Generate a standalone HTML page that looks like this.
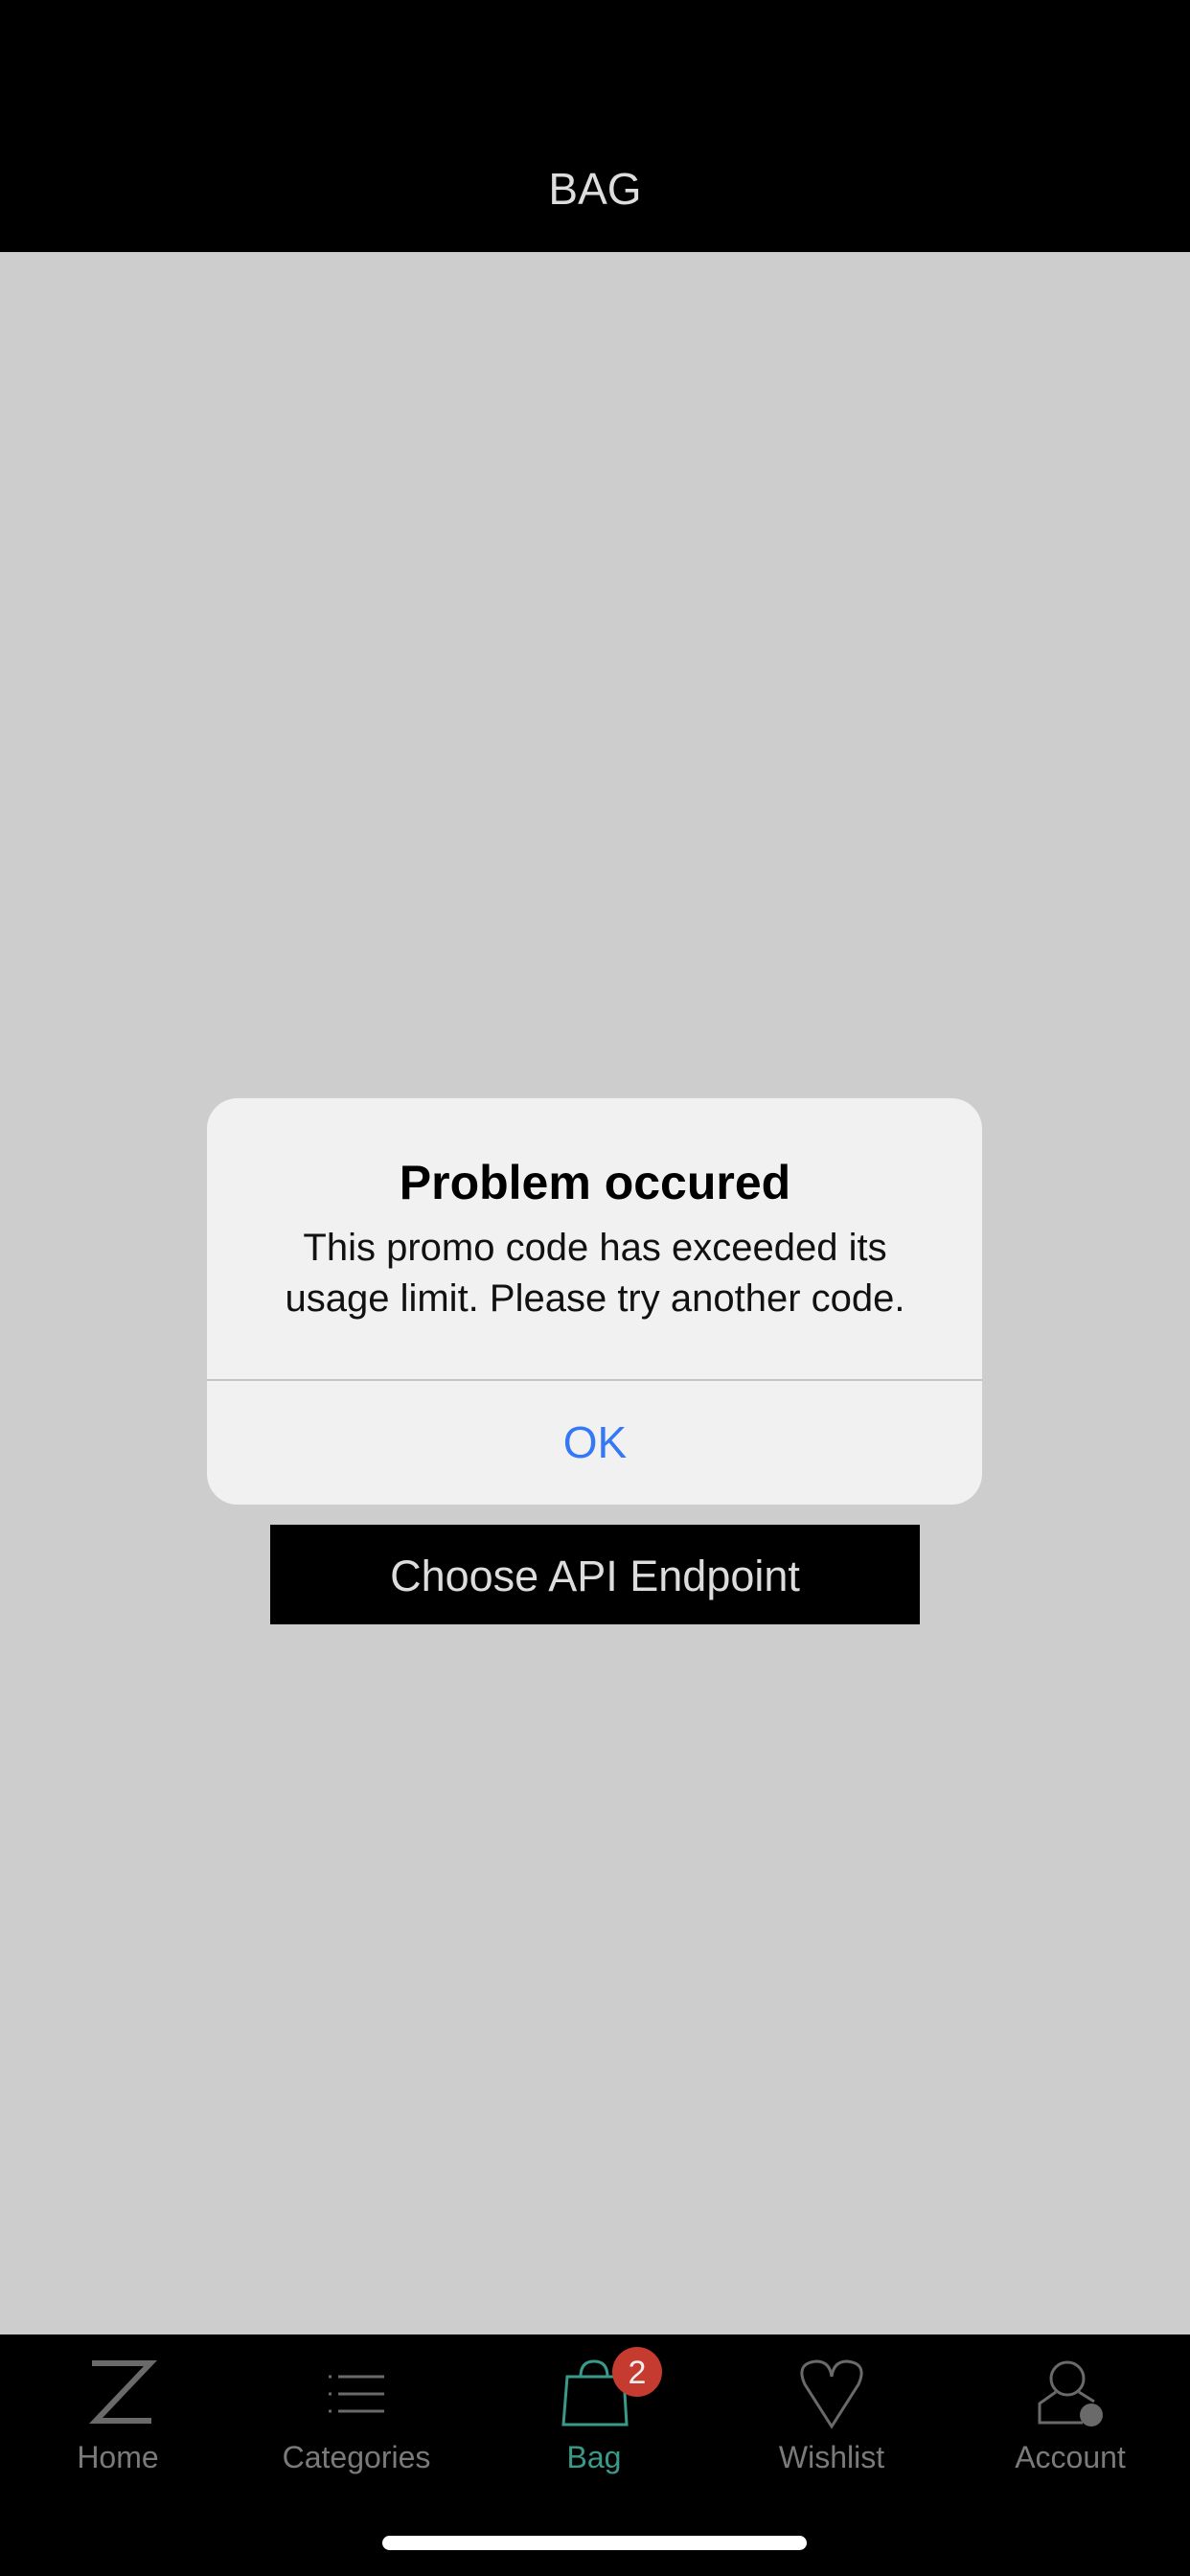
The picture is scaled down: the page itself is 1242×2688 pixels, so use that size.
<!DOCTYPE html>
<html><head><meta charset="utf-8"><style>
body{margin:0;width:1242px;height:2688px;background:#cdcdcd;position:relative;overflow:hidden;font-family:"Liberation Sans",sans-serif}
.hdr{position:absolute;left:0;top:0;width:1242px;height:263px;background:#000}
.hdr div{position:absolute;top:170px;width:100%;text-align:center;color:#ddd;font-size:46px}
.dlg{position:absolute;left:216px;top:1146px;width:809px;height:424px;background:#f1f1f1;border-radius:32px}
.t{position:absolute;top:1205px;width:100%;text-align:center;font-weight:bold;font-size:50px;color:#000}
.b{position:absolute;top:1276px;width:100%;text-align:center;font-size:40px;line-height:53px;color:#111}
.dv{position:absolute;left:0;right:0;top:293px;height:2px;background:#c4c4c4}
.ok{position:absolute;top:1478px;width:100%;text-align:center;font-size:46px;color:#3478f6}
.btn{position:absolute;left:282px;top:1591px;width:678px;height:104px;background:#000;color:#ddd;font-size:45px;text-align:center;line-height:108px}
.tab{position:absolute;left:0;top:2436px;width:1242px;height:252px;background:#000}
.lb{position:absolute;top:2546px;width:240px;margin-left:-120px;text-align:center;font-size:32px;color:#7a7a7a}
.hi{position:absolute;left:399px;top:2646px;width:443px;height:15px;border-radius:8px;background:#fff}
</style></head><body>
<div class="hdr"><div>BAG</div></div>
<div class="dlg"><div class="dv"></div></div>
<div class="t">Problem occured</div>
<div class="b">This promo code has exceeded its<br>usage limit. Please try another code.</div>
<div class="ok">OK</div>
<div class="btn">Choose API Endpoint</div>
<div class="tab"></div>
<svg style="position:absolute;left:0;top:2436px" width="1242" height="130">
<path d="M96 30H157L100 90H158" fill="none" stroke="#6a6a6a" stroke-width="6"/>
<g stroke="#6a6a6a" stroke-width="3"><path d="M353 44h48M353 62h48M353 80h48M343 44h3M343 62h3M343 80h3"/></g>
<path d="M588 94L592 44H651L654 94Z M606 44Q606 28 620 28Q634 28 634 44" fill="none" stroke="#3a9a8a" stroke-width="3"/>
<circle cx="665" cy="39" r="26" fill="#c53b30"/>
<text x="665" y="51" font-size="34" fill="#eee" text-anchor="middle" font-family="Liberation Sans">2</text>
<path d="M868 96L840 52Q830 30 852 28Q866 28 868 44Q870 28 884 28Q906 30 896 52Z" fill="none" stroke="#6a6a6a" stroke-width="3"/>
<circle cx="1114" cy="46" r="17" fill="none" stroke="#6a6a6a" stroke-width="3"/>
<path d="M1102 60L1085 72V92H1130 M1126 60L1142 70" fill="none" stroke="#6a6a6a" stroke-width="3"/>
<circle cx="1139" cy="84" r="12" fill="#6a6a6a"/>
</svg>
<div class="lb" style="left:123px">Home</div>
<div class="lb" style="left:372px">Categories</div>
<div class="lb" style="left:620px;color:#3a9a8a">Bag</div>
<div class="lb" style="left:868px">Wishlist</div>
<div class="lb" style="left:1117px">Account</div>
<div class="hi"></div>
</body></html>
